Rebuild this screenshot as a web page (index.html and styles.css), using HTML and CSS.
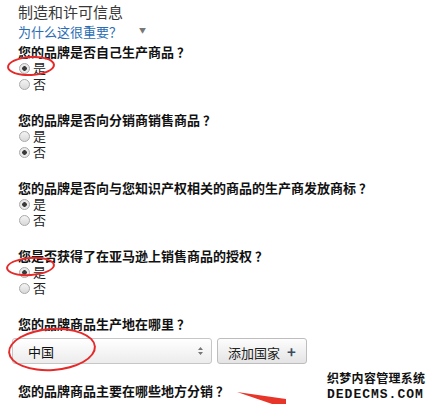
FILE: index.html
```html
<!DOCTYPE html>
<html lang="zh-CN">
<head>
  <meta charset="UTF-8">
  <meta name="viewport" content="width=device-width, initial-scale=1.0">
  <title>制造和许可信息</title>
  <link rel="stylesheet" href="styles.css">
</head>
<body>
  <div class="page">
    <h1 class="section-title">制造和许可信息</h1>
    <a class="why" href="#">为什么这很重要？<span class="caret">&#9660;</span></a>

    <div class="field first">
      <p class="question">您的品牌是否自己生产商品 ？</p>
      <label class="opt"><input type="radio" name="q1" checked> 是</label>
      <label class="opt"><input type="radio" name="q1"> 否</label>
    </div>

    <div class="field">
      <p class="question">您的品牌是否向分销商销售商品 ？</p>
      <label class="opt"><input type="radio" name="q2"> 是</label>
      <label class="opt"><input type="radio" name="q2" checked> 否</label>
    </div>

    <div class="field">
      <p class="question">您的品牌是否向与您知识产权相关的商品的生产商发放商标 ？</p>
      <label class="opt"><input type="radio" name="q3" checked> 是</label>
      <label class="opt"><input type="radio" name="q3"> 否</label>
    </div>

    <div class="field">
      <p class="question">您是否获得了在亚马逊上销售商品的授权 ？</p>
      <label class="opt"><input type="radio" name="q4" checked> 是</label>
      <label class="opt"><input type="radio" name="q4"> 否</label>
    </div>

    <div class="field">
      <p class="question">您的品牌商品生产地在哪里 ？</p>
      <div class="country-row">
        <div class="fake-select">
          <span>中国</span>
          <svg class="updown" width="5" height="8" viewBox="0 0 5 8"><path d="M2.5 0 L5 3 H0 Z M2.5 8 L5 5 H0 Z" fill="#777"/></svg>
        </div>
        <button class="add-btn" type="button">添加国家 <span class="plus">+</span></button>
      </div>
    </div>

    <p class="question last">您的品牌商品主要在哪些地方分销 ？</p>

    <!-- annotations drawn over the screenshot -->
    <div class="mark mark-1"></div>
    <div class="mark mark-2"></div>
    <div class="mark mark-3"></div>
    <svg class="arrow" width="52" height="16" viewBox="0 0 52 16">
      <polygon points="1,2 50,9 50,16 42,16" fill="#e8352a"/>
    </svg>
    <div class="watermark">
      <div class="wm-cn">织梦内容管理系统</div>
      <div class="wm-en">DEDECMS.COM</div>
    </div>
  </div>
</body>
</html>
```

FILE: styles.css
```css
body {
  margin: 0;
  background: #fff;
  font-family: "Noto Sans CJK SC", "Liberation Sans", sans-serif;
  color: #111;
}

.page {
  position: relative;
  height: 404px;
  overflow: hidden;
  padding: 2px 0 0 18px;
  box-sizing: border-box;
}

.section-title {
  margin: 0;
  font-size: 15px;
  line-height: 19px;
  font-weight: normal;
  color: #383838;
}

.why {
  display: block;
  font-size: 13px;
  line-height: 19px;
  color: #2a6db3;
  text-decoration: none;
}

.caret {
  font-size: 7px;
  color: #777;
  margin-left: 17px;
  vertical-align: 4px;
}

.field {
  margin-bottom: 19px;
}

.field.first {
  margin-top: 2px;
}

.question {
  margin: 0;
  font-size: 13px;
  line-height: 17px;
  font-weight: bold;
  color: #111;
}

.opt {
  display: flex;
  align-items: center;
  gap: 3px;
  font-size: 13px;
  line-height: 16px;
  color: #222;
}

.opt input {
  appearance: none;
  -webkit-appearance: none;
  width: 11px;
  height: 11px;
  margin: 0 0 0 1px;
  border: 1px solid #a9a9a9;
  border-radius: 50%;
  background: linear-gradient(#f4f4f4, #d9d9d9);
  box-sizing: border-box;
}

.opt input:checked {
  background: radial-gradient(circle, #3a3a3a 0 2px, #e9e9e9 2.6px);
}

.country-row {
  display: flex;
  gap: 5px;
  margin: 6px 0 0 -6px;
}

.fake-select {
  width: 200px;
  height: 26px;
  box-sizing: border-box;
  display: flex;
  align-items: center;
  justify-content: space-between;
  padding: 0 8px 0 15px;
  border: 1px solid #c6c6c6;
  border-radius: 3px;
  background: linear-gradient(#ffffff, #ececec);
  font-size: 13px;
  color: #111;
}

.add-btn {
  width: 90px;
  height: 26px;
  box-sizing: border-box;
  padding: 0 0 0 10px;
  text-align: left;
  border: 1px solid #bdbdbd;
  border-radius: 3px;
  background: linear-gradient(#fdfdfd, #e4e4e4);
  font-family: inherit;
  font-size: 13px;
  color: #222;
}

.plus {
  font-weight: bold;
  font-size: 15px;
  color: #3c4c60;
  margin-left: 4px;
}

.question.last {
  margin-top: -1px;
}

.mark {
  position: absolute;
  border: 2px solid #e52a2a;
  border-radius: 50%;
}

.mark-1 {
  left: 7px;
  top: 56px;
  width: 44px;
  height: 16px;
  transform: rotate(-3deg);
}

.mark-2 {
  left: 6px;
  top: 257px;
  width: 45px;
  height: 15px;
  transform: rotate(-4deg);
}

.mark-3 {
  left: 8px;
  top: 328px;
  width: 84px;
  height: 39px;
  transform: rotate(-4deg);
}

.arrow {
  position: absolute;
  left: 236px;
  top: 390px;
}

.watermark {
  position: absolute;
  left: 327px;
  top: 369px;
  font-weight: bold;
  color: #111;
  text-shadow: 1px 0 #fff, -1px 0 #fff, 0 1px #fff, 0 -1px #fff;
}

.wm-cn {
  font-size: 12px;
  line-height: 18px;
  letter-spacing: 0.3px;
}

.wm-en {
  font-family: "Liberation Mono", monospace;
  font-size: 13px;
  line-height: 15px;
  letter-spacing: 1px;
}
```
